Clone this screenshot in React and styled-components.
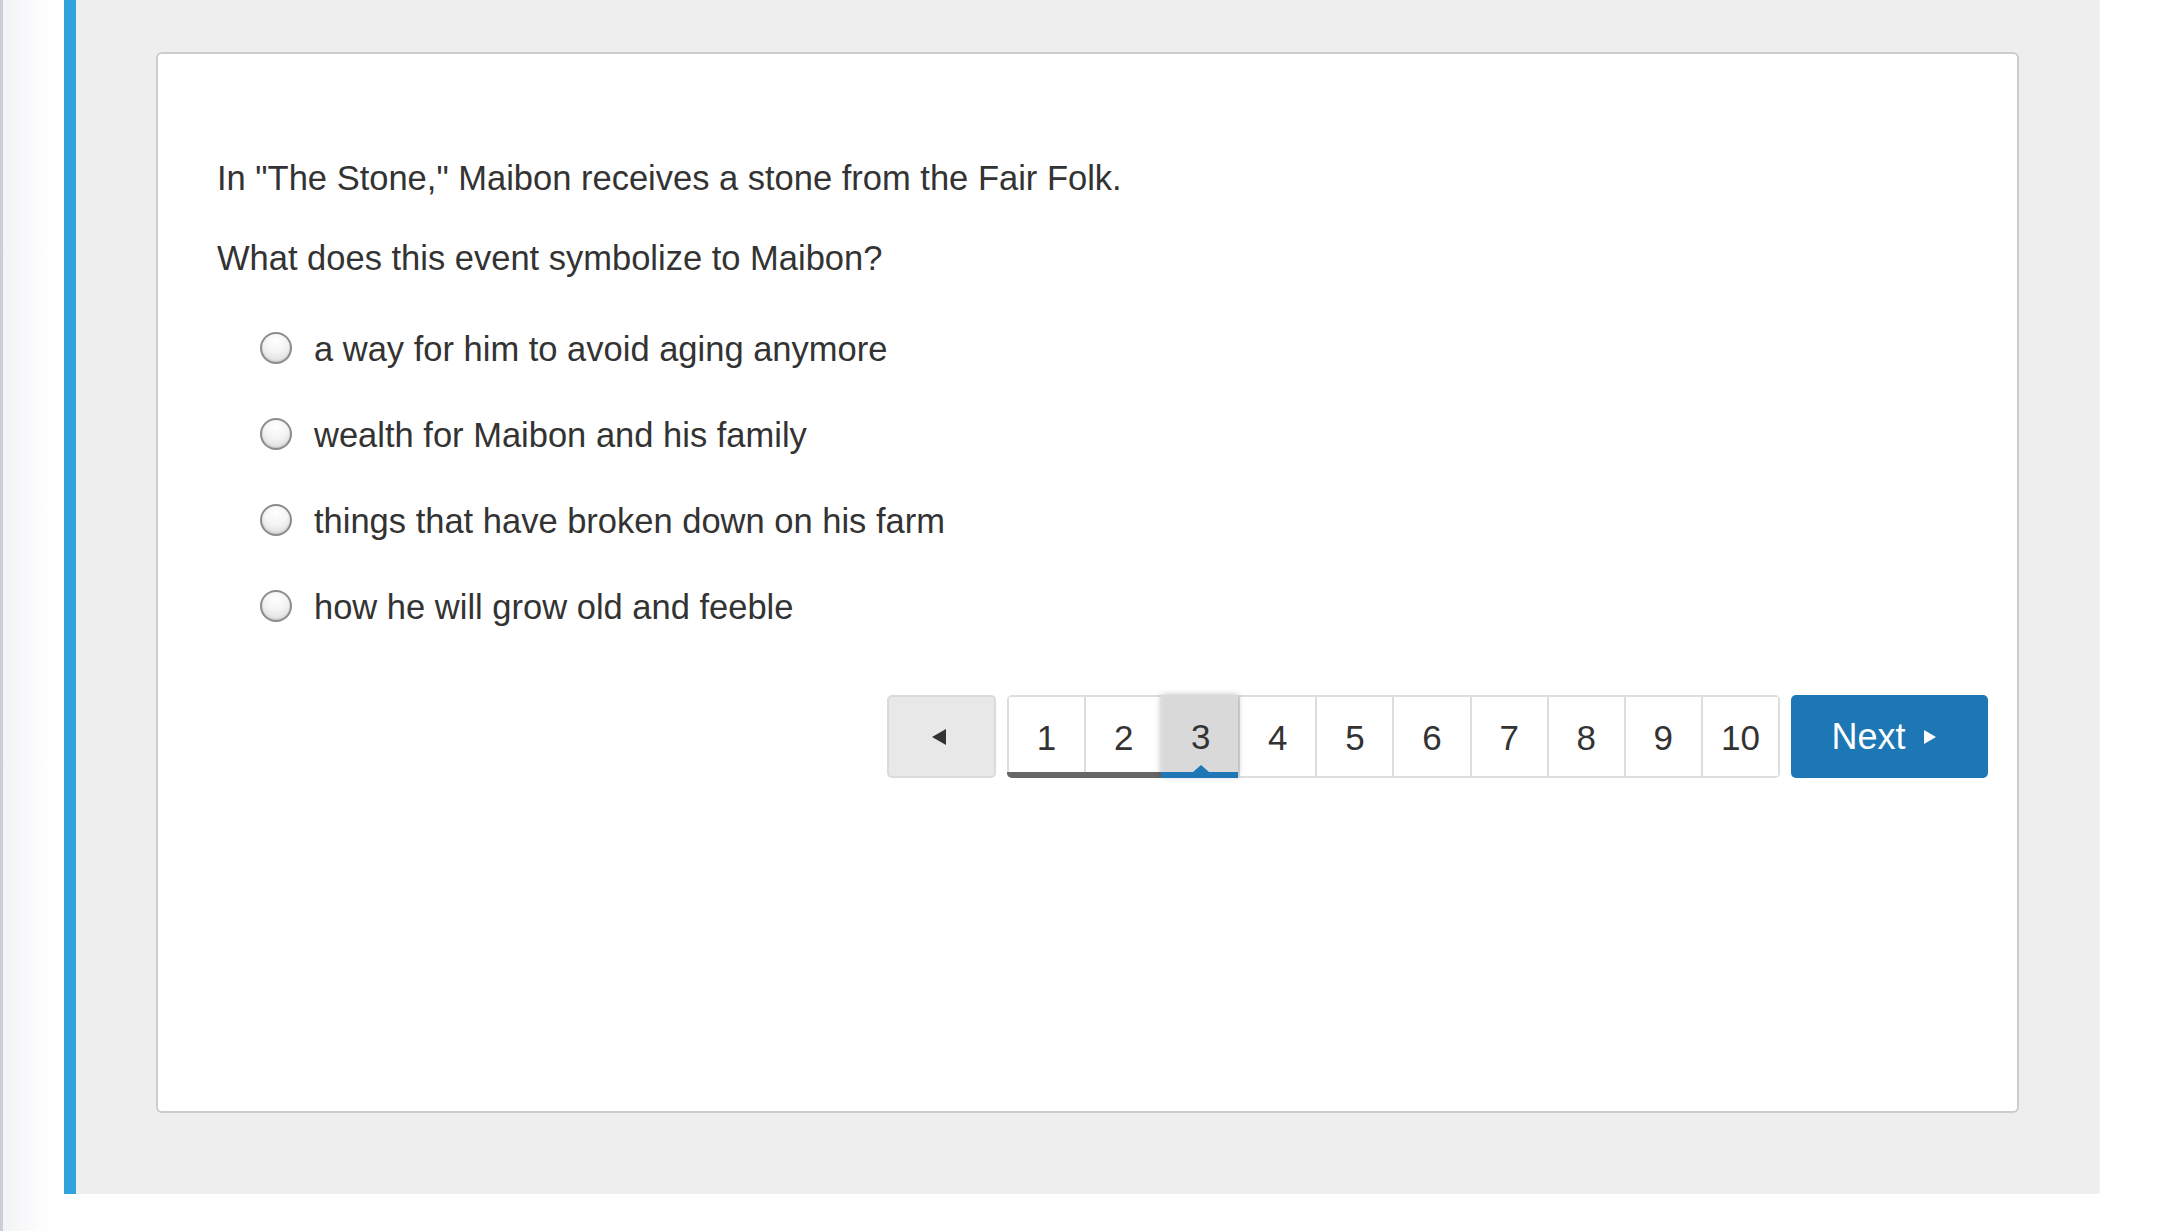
import styled, { createGlobalStyle } from "styled-components";

const GlobalStyle = createGlobalStyle`
  html, body {
    margin: 0;
    padding: 0;
    background: #ffffff;
  }
  body {
    font-family: "Liberation Sans", Arial, Helvetica, sans-serif;
    color: #333333;
  }
`;

const answers = [
  "a way for him to avoid aging anymore",
  "wealth for Maibon and his family",
  "things that have broken down on his farm",
  "how he will grow old and feeble",
];

const pages = [1, 2, 3, 4, 5, 6, 7, 8, 9, 10];
const current = 3;

const App = () => {
  return (
    <Page>
      <GlobalStyle />
      <Gutter />
      <Main>
        <Card>
          <Prompt>In "The Stone," Maibon receives a stone from the Fair Folk.</Prompt>
          <Question>What does this event symbolize to Maibon?</Question>
          <Choices>
            {answers.map((a) => (
              <Choice key={a}>
                <Radio />
                <span>{a}</span>
              </Choice>
            ))}
          </Choices>
          <Pager>
            <PrevButton aria-label="Previous">
              <svg width="14" height="16" viewBox="0 0 14 16">
                <path d="M14 0 L14 16 L0 8 Z" fill="#333" />
              </svg>
            </PrevButton>
            <PageGroup>
              {pages.map((p) => (
                <PageCell
                  key={p}
                  $state={p < current ? "done" : p === current ? "current" : "todo"}
                >
                  {p}
                </PageCell>
              ))}
            </PageGroup>
            <NextButton>
              Next
              <svg width="12" height="14" viewBox="0 0 12 14">
                <path d="M0 0 L12 7 L0 14 Z" fill="#fff" />
              </svg>
            </NextButton>
          </Pager>
        </Card>
      </Main>
    </Page>
  );
};

export default App;

const Page = styled.div`
  display: flex;
  width: 2160px;
  height: 1231px;
  overflow: hidden;
  align-items: flex-start;
`;

const Gutter = styled.div`
  box-sizing: border-box;
  width: 64px;
  height: 1231px;
  border-left: 3px solid #c9d0d7;
  background: linear-gradient(to right, #f1f3f5 0px, #fbfbfc 30px, #ffffff 50px);
`;

const Main = styled.div`
  box-sizing: border-box;
  display: flex;
  flex-direction: column;
  width: 2036px;
  height: 1194px;
  padding: 52px 80px 81px 80px;
  background: #eeeeee;
  border-left: 12px solid #2ea3dc;
  border-right: 1px solid #f4f4f4;
`;

const Card = styled.div`
  box-sizing: border-box;
  flex: 1;
  background: #ffffff;
  border: 2px solid #cccccc;
  border-radius: 6px;
  padding: 100px 29px 0 59px;
  font-size: 34.5px;
  line-height: 48px;
`;

const Prompt = styled.p`
  margin: 0;
`;

const Question = styled.p`
  margin: 32px 0 0 0;
`;

const Choices = styled.div`
  display: flex;
  flex-direction: column;
  row-gap: 38px;
  margin-top: 43px;
  padding-left: 43px;
`;

const Choice = styled.label`
  display: flex;
  align-items: center;
  column-gap: 22px;
  height: 48px;
`;

const Radio = styled.span`
  box-sizing: border-box;
  display: inline-block;
  width: 32px;
  height: 32px;
  border-radius: 50%;
  border: 2px solid #8c8c8c;
  background: radial-gradient(circle at 50% 25%, #ffffff 0%, #f4f4f4 45%, #d6d6d6 100%);
  box-shadow: inset 0 -1px 2px rgba(0, 0, 0, 0.12);
  margin-top: -3px;
`;

const Pager = styled.div`
  display: flex;
  justify-content: flex-end;
  column-gap: 11px;
  margin-top: 64px;
  height: 83px;
`;

const PrevButton = styled.div`
  box-sizing: border-box;
  width: 109px;
  display: flex;
  align-items: center;
  justify-content: center;
  background: #e8e8e8;
  border: 2px solid #dadada;
  border-radius: 5px;
  padding-right: 6px;
`;

const PageGroup = styled.div`
  box-sizing: border-box;
  display: flex;
  width: 773px;
  border: 2px solid #dddddd;
  border-radius: 5px;
  background: #ffffff;
`;

const PageCell = styled.div`
  position: relative;
  flex: 1;
  display: flex;
  align-items: center;
  justify-content: center;
  font-size: 35px;
  color: #333333;
  padding-top: 2px;
  background: ${({ $state }) => ($state === "current" ? "#d9d9d9" : "#ffffff")};
  box-shadow: ${({ $state }) =>
    $state === "current" ? "0 0 6px rgba(0, 0, 0, 0.28)" : "none"};
  z-index: ${({ $state }) => ($state === "current" ? 1 : 0)};
  margin-top: ${({ $state }) => ($state === "current" ? "-2px" : "0")};
  border-left: 2px solid #dddddd;
  &:first-child {
    border-left: none;
  }

  &::after {
    content: "";
    display: ${({ $state }) => ($state === "todo" ? "none" : "block")};
    position: absolute;
    left: -2px;
    right: 0;
    bottom: -2px;
    height: 6px;
    background: ${({ $state }) => ($state === "current" ? "#1f78b5" : "#666666")};
  }
  &:first-child::after {
    left: -2px;
    border-bottom-left-radius: 5px;
  }

  &::before {
    content: "";
    display: ${({ $state }) => ($state === "current" ? "block" : "none")};
    position: absolute;
    left: 50%;
    bottom: 4px;
    margin-left: -8px;
    border-left: 8px solid transparent;
    border-right: 8px solid transparent;
    border-bottom: 7px solid #1f78b5;
  }
`;

const NextButton = styled.div`
  box-sizing: border-box;
  width: 197px;
  display: flex;
  align-items: center;
  justify-content: center;
  column-gap: 18px;
  background: #1d77b4;
  border-radius: 5px;
  color: #ffffff;
  font-size: 36px;
  padding-right: 12px;
`;
